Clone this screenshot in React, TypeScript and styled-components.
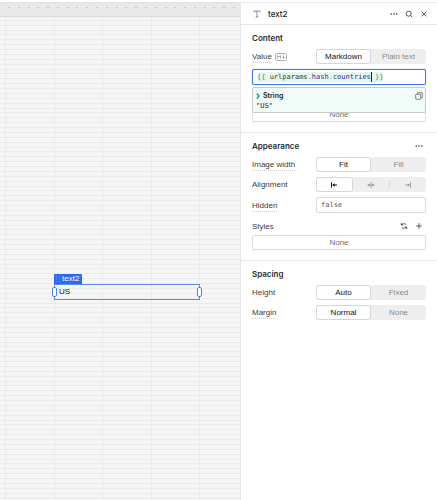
import React, { useState } from "react";
import styled, { createGlobalStyle } from "styled-components";

const GlobalStyle = createGlobalStyle`
  *, *::before, *::after { box-sizing: border-box; }
  body { margin: 0; background: #fff; }
  button, input { font: inherit; color: inherit; margin: 0; }
`;

const sans = `"Liberation Sans", Arial, sans-serif`;
const display = `Inter, "Liberation Sans", sans-serif`;
const mono = `"DejaVu Sans Mono", "Liberation Mono", monospace`;

const Page = styled.div`
  display: flex;
  min-height: 100vh;
  padding-top: 2px;
  font-family: ${sans};
  font-size: 8px;
  line-height: 10px;
  color: #2b2b2b;
`;

const Workspace = styled.main`
  flex: 1;
  display: flex;
  flex-direction: column;
  min-width: 0;
  border-right: 1px solid #e6e6e6;
`;

const Ruler = styled.div`
  display: flex;
  justify-content: space-between;
  height: 15px;
  padding: 4px 5px 0 8px;
  background: #e8e8e8;
  border-top: 1px solid #e2e2e2;
  border-bottom: 1px solid #dcdcdc;
`;

const Tick = styled.span`
  width: 2px;
  height: 1px;
  background: #cacaca;
`;

const Grid = styled.div`
  position: relative;
  flex: 1;
  background-color: #f5f5f5;
  background-image:
    linear-gradient(90deg, #ebebeb 1px, transparent 1px 49px, #ebebeb 49px 50px, transparent 50px),
    linear-gradient(
      #ebebeb 1px, transparent 1px 5px,
      #ebebeb 5px 6px, transparent 6px 10px,
      #ebebeb 10px 11px, transparent 11px 14px,
      #ebebeb 14px 15px, transparent 15px 19px,
      #ebebeb 19px 20px, transparent 20px 24px,
      #ebebeb 24px 25px, transparent 25px 29px,
      #ebebeb 29px 30px, transparent 30px 34px,
      #ebebeb 34px 35px, transparent 35px
    );
  background-size: 97px 100%, 100% 39px;
  background-position: 5px 0, 0 3px;
`;

const Widget = styled.div`
  position: absolute;
  left: 54px;
  top: 267px;
  width: 146px;
  height: 16px;
  padding: 2px 4px;
  border: 1px solid #5a8bea;
  color: #111;
`;

const WidgetTag = styled.div`
  position: absolute;
  left: -1px;
  bottom: 15px;
  display: flex;
  align-items: center;
  gap: 2px;
  height: 10px;
  padding: 0 3px 0 2px;
  border-radius: 1px 1px 0 0;
  background: #2c6bf0;
  color: #fff;
`;

const Handle = styled.span<{ $side: "left" | "right" }>`
  position: absolute;
  top: 2px;
  ${(p) => p.$side}: -3px;
  width: 5px;
  height: 10px;
  border: 1px solid #4f84ec;
  border-radius: 2px;
  background: #fff;
`;

const Inspector = styled.aside`
  width: 196px;
  flex: none;
  background: #fff;
  border-top: 1px solid #e8e8e8;
`;

const Header = styled.header`
  display: flex;
  align-items: center;
  height: 22px;
  padding: 0 8px 0 12px;
  border-bottom: 1px solid #e6e6e6;
`;

const WidgetName = styled.h1`
  flex: 1;
  margin: 0 0 0 7px;
  font-family: ${display};
  font-size: 8px;
  font-weight: 500;
  line-height: 10px;
  color: #1c1c1c;
`;

const Tools = styled.div`
  display: flex;
  align-items: center;
  gap: 5px;
`;

const IconButton = styled.button`
  display: flex;
  align-items: center;
  justify-content: center;
  width: 10px;
  height: 10px;
  padding: 0;
  border: 0;
  background: none;
  color: #333;
`;

const Section = styled.section<{ $last?: boolean }>`
  display: flex;
  flex-direction: column;
  gap: 5px;
  padding: 8px 11px 10px;
  border-bottom: ${(p) => (p.$last ? "0" : "1px solid #e8e8e8")};
`;

const SectionHead = styled.div`
  display: flex;
  align-items: center;
  justify-content: space-between;
  height: 10px;
  margin-bottom: 1px;
  padding-right: 2px;
`;

const SectionTitle = styled.h2`
  margin: 0;
  font-family: ${display};
  font-size: 8px;
  font-weight: 600;
  line-height: 10px;
  color: #2b2b2b;
`;

const Row = styled.div`
  display: flex;
  align-items: center;
  justify-content: space-between;
`;

const LabelGroup = styled.div`
  display: flex;
  align-items: center;
  gap: 3px;
`;

const Label = styled.label<{ $hint?: boolean }>`
  padding-top: 2px;
  line-height: 10px;
  color: #3c3c3c;
  border-bottom: 1px ${(p) => (p.$hint ? "dotted #c8c8c8" : "solid transparent")};
`;

const Segments = styled.div`
  display: flex;
  width: 110px;
  height: 15px;
  border-radius: 3px;
  background: #eeeeee;
`;

const Segment = styled.button<{ $on: boolean; $divided?: boolean }>`
  position: relative;
  display: flex;
  flex: 1;
  align-items: center;
  justify-content: center;
  padding: 0;
  border: 1px solid ${(p) => (p.$on ? "#d6d6d6" : "transparent")};
  border-radius: 3px;
  background: ${(p) => (p.$on ? "#fff" : "none")};
  color: ${(p) => (p.$on ? "#111" : "#8a8a8a")};
  &::before {
    content: "";
    display: ${(p) => (p.$divided ? "block" : "none")};
    position: absolute;
    left: -1px;
    top: 3px;
    bottom: 3px;
    width: 1px;
    background: #dcdcdc;
  }
`;

const TextBox = styled.input`
  width: 110px;
  height: 16px;
  padding: 0 4px;
  border: 1px solid #dadada;
  border-radius: 2px;
  background: #fff;
  color: #555;
  font-family: ${mono};
  font-size: 7px;
`;

const NoneButton = styled.button<{ $spaced?: boolean }>`
  height: 15px;
  margin-top: ${(p) => (p.$spaced ? "17px" : "0")};
  padding: 0;
  border: 1px solid #dadada;
  border-radius: 2px;
  background: #fff;
  color: #707070;
`;

const StyleRow = styled(Row)`
  height: 12px;
  margin: 2px 0 -2px;
  padding-right: 2px;
`;

const Editor = styled.div`
  position: relative;
  display: flex;
  align-items: center;
  height: 16px;
  border: 1px solid #3f78ee;
  border-radius: 2px;
  background: #fff;
  box-shadow: 0 0 1px #3f78ee;
  font-family: ${mono};
  font-size: 7px;
  line-height: 10px;
`;

const CodeInput = styled.input`
  position: absolute;
  inset: 0;
  width: 100%;
  padding: 0 4px;
  border: 0;
  outline: 0;
  background: none;
  color: transparent;
`;

const Code = styled.div`
  display: flex;
  margin-left: 4px;
  white-space: pre;
  background: #e5f8ee;
  color: #333;
`;

const Token = styled.span<{ $kind: "brace" | "dot" | "prop" }>`
  color: ${(p) => ({ brace: "#129a62", dot: "#d35c4a", prop: "#3029b0" })[p.$kind]};
`;

const Caret = styled.span`
  width: 1px;
  margin-right: -1px;
  background: #222;
`;

const Preview = styled.output`
  position: absolute;
  left: -1px;
  right: -1px;
  top: 17px;
  z-index: 1;
  padding: 2px 1px 0 3px;
  height: 26px;
  border: 1px solid #c6cbc8;
  border-radius: 2px;
  background: #f1fbf7;
  color: #222;
`;

const PreviewHead = styled.div`
  display: flex;
  align-items: center;
  justify-content: space-between;
  height: 11px;
  font-family: ${display};
`;

const PreviewType = styled.span`
  display: flex;
  align-items: center;
  gap: 3px;
  font-size: 7px;
  font-weight: 600;
`;

const Dots = () => (
  <svg width="8" height="8" viewBox="0 0 8 8" fill="currentColor">
    <circle cx="1.2" cy="4" r="0.8" />
    <circle cx="4" cy="4" r="0.8" />
    <circle cx="6.8" cy="4" r="0.8" />
  </svg>
);

const line = { fill: "none", stroke: "currentColor", strokeWidth: 0.8 };

const TextIcon = () => (
  <svg width="8" height="8" viewBox="0 0 8 8" {...line} stroke="#777">
    <path d="M1 2.5V1h6v1.5M4 1v6M2.7 7h2.6" />
  </svg>
);

const SearchIcon = () => (
  <svg width="8" height="8" viewBox="0 0 8 8" {...line}>
    <circle cx="3.7" cy="3.7" r="2.5" />
    <path d="M5.5 5.5L7.3 7.3" />
  </svg>
);

const CloseIcon = () => (
  <svg width="8" height="8" viewBox="0 0 8 8" {...line}>
    <path d="M1.6 1.6l4.8 4.8M6.4 1.6L1.6 6.4" />
  </svg>
);

const PlusIcon = () => (
  <svg width="8" height="8" viewBox="0 0 8 8" {...line}>
    <path d="M4 1.2v5.6M1.2 4h5.6" />
  </svg>
);

const SwapIcon = () => (
  <svg width="8" height="8" viewBox="0 0 8 8" {...line}>
    <path d="M1.3 1v2h2M1.5 3C2.3 1.6 4.6 1 6.2 2.7M6.7 7V5h-2M6.5 5C5.7 6.4 3.4 7 1.8 5.3" />
  </svg>
);

const MarkdownIcon = () => (
  <svg width="12" height="8" viewBox="0 0 12 8" {...line} stroke="#999">
    <rect x="0.5" y="0.5" width="11" height="7" rx="1" />
    <path d="M2.5 5.7V2.5L4 4l1.5-1.5v3.2M8.5 2.3v3M7.2 4.3l1.3 1.3 1.3-1.3" />
  </svg>
);

const CopyIcon = () => (
  <svg width="8" height="8" viewBox="0 0 8 8" {...line} stroke="#666">
    <rect x="0.7" y="2.3" width="5" height="5" rx="0.6" />
    <path d="M2.4 2.2V0.8h4.9v4.9H5.8" />
  </svg>
);

const ChevronIcon = () => (
  <svg width="4" height="6" viewBox="0 0 4 6" fill="none" stroke="#1fa56c" strokeWidth="1.5">
    <path d="M0.8 0.6L3 3L0.8 5.4" />
  </svg>
);

const GripIcon = () => (
  <svg width="4" height="6" viewBox="0 0 4 6" fill="#6996f6">
    <path d="M0 0h1v1H0zM3 0h1v1H3zM0 2.5h1v1H0zM3 2.5h1v1H3zM0 5h1v1H0zM3 5h1v1H3z" />
  </svg>
);

const AlignStart = () => (
  <svg width="8" height="6" viewBox="0 0 8 6" {...line} strokeWidth={1}>
    <path d="M1.5 0.3v5.4M2.7 3H7" />
    <path d="M4.7 1.2L2.5 3l2.2 1.8z" fill="currentColor" stroke="none" />
  </svg>
);

const AlignMiddle = () => (
  <svg width="8" height="6" viewBox="0 0 8 6" {...line}>
    <path d="M4 0v6M0.5 3h2.3M5.2 3h2.3" />
    <path d="M1.7 1.4L3.5 3L1.7 4.6zM6.3 1.4L4.5 3l1.8 1.6z" fill="currentColor" stroke="none" />
  </svg>
);

const AlignEnd = () => (
  <svg width="8" height="6" viewBox="0 0 8 6" {...line}>
    <path d="M6.5 0.3v5.4M1 3h4.3" />
    <path d="M3.8 1.4L5.6 3L3.8 4.6z" fill="currentColor" stroke="none" />
  </svg>
);

type Option = { name: string; icon?: React.ReactNode };

function SegmentedControl({ label, options }: { label: string; options: Option[] }) {
  const [active, setActive] = useState(0);
  return (
    <Segments role="group" aria-label={label}>
      {options.map((option, i) => (
        <Segment
          key={option.name}
          type="button"
          $on={i === active}
          $divided={i > 0 && i !== active && i - 1 !== active}
          aria-pressed={i === active}
          aria-label={option.icon ? option.name : undefined}
          onClick={() => setActive(i)}
        >
          {option.icon ?? option.name}
        </Segment>
      ))}
    </Segments>
  );
}

function Property({ label, hint, options }: { label: string; hint?: boolean; options: Option[] }) {
  return (
    <Row>
      <Label as="span" $hint={hint}>{label}</Label>
      <SegmentedControl label={label} options={options} />
    </Row>
  );
}

export default function App() {
  return (
    <Page>
      <GlobalStyle />
      <Workspace>
        <Ruler>
          {Array.from({ length: 24 }, (_, i) => (
            <Tick key={i} />
          ))}
        </Ruler>
        <Grid>
          <Widget>
            <WidgetTag>
              <GripIcon />
              text2
            </WidgetTag>
            US
            <Handle $side="left" />
            <Handle $side="right" />
          </Widget>
        </Grid>
      </Workspace>

      <Inspector>
        <Header>
          <TextIcon />
          <WidgetName>text2</WidgetName>
          <Tools>
            <IconButton type="button" aria-label="More"><Dots /></IconButton>
            <IconButton type="button" aria-label="Search"><SearchIcon /></IconButton>
            <IconButton type="button" aria-label="Close"><CloseIcon /></IconButton>
          </Tools>
        </Header>

        <Section>
          <SectionHead>
            <SectionTitle>Content</SectionTitle>
          </SectionHead>
          <Row>
            <LabelGroup>
              <Label htmlFor="value" $hint>Value</Label>
              <MarkdownIcon />
            </LabelGroup>
            <SegmentedControl label="Format" options={[{ name: "Markdown" }, { name: "Plain text" }]} />
          </Row>
          <Editor>
            <Code aria-hidden="true">
              <Token $kind="brace">{"{{"}</Token>
              {" urlparams"}
              <Token $kind="dot">.</Token>
              <Token $kind="prop">hash</Token>
              <Token $kind="dot">.</Token>
              <Token $kind="prop">countries</Token>
              <Caret />
              <Token $kind="brace">{" }}"}</Token>
            </Code>
            <CodeInput id="value" readOnly value="{{ urlparams.hash.countries }}" />
            <Preview htmlFor="value">
              <PreviewHead>
                <PreviewType>
                  <ChevronIcon />
                  String
                </PreviewType>
                <IconButton type="button" aria-label="Copy"><CopyIcon /></IconButton>
              </PreviewHead>
              "US"
            </Preview>
          </Editor>
          <NoneButton type="button" $spaced>None</NoneButton>
        </Section>

        <Section>
          <SectionHead>
            <SectionTitle>Appearance</SectionTitle>
            <IconButton type="button" aria-label="Appearance options"><Dots /></IconButton>
          </SectionHead>
          <Property label="Image width" hint options={[{ name: "Fit" }, { name: "Fill" }]} />
          <Property
            label="Alignment"
            options={[
              { name: "Left", icon: <AlignStart /> },
              { name: "Center", icon: <AlignMiddle /> },
              { name: "Right", icon: <AlignEnd /> },
            ]}
          />
          <Row>
            <Label htmlFor="hidden" $hint>Hidden</Label>
            <TextBox id="hidden" defaultValue="false" />
          </Row>
          <StyleRow>
            <Label as="span">Styles</Label>
            <Tools>
              <IconButton type="button" aria-label="Swap styles"><SwapIcon /></IconButton>
              <IconButton type="button" aria-label="Add style"><PlusIcon /></IconButton>
            </Tools>
          </StyleRow>
          <NoneButton type="button">None</NoneButton>
        </Section>

        <Section $last>
          <SectionHead>
            <SectionTitle>Spacing</SectionTitle>
          </SectionHead>
          <Property label="Height" options={[{ name: "Auto" }, { name: "Fixed" }]} />
          <Property label="Margin" hint options={[{ name: "Normal" }, { name: "None" }]} />
        </Section>
      </Inspector>
    </Page>
  );
}
